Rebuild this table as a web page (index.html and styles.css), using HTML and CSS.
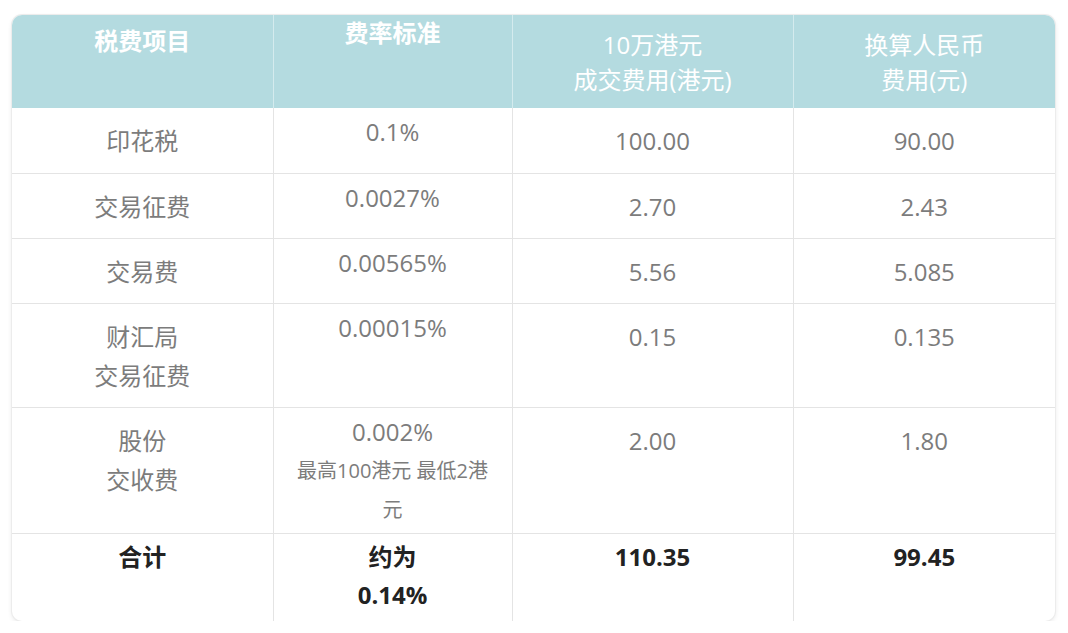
FILE: index.html
```html
<!DOCTYPE html>
<html lang="zh-CN">
<head>
<meta charset="utf-8">
<title>港股交易费用</title>
<link rel="stylesheet" href="styles.css">
</head>
<body>
<div class="card">
  <table class="fees">
    <colgroup>
      <col class="c1"><col class="c2"><col class="c3"><col class="c4">
    </colgroup>
    <thead>
      <tr class="head">
        <th class="h1">税费项目</th>
        <th class="h2">费率标准</th>
        <th class="h3">10万港元<br>成交费用(港元)</th>
        <th class="h3">换算人民币<br>费用(元)</th>
      </tr>
    </thead>
    <tbody>
      <tr class="r1">
        <td>印花税</td><td class="rate">0.1%</td><td>100.00</td><td>90.00</td>
      </tr>
      <tr class="r1">
        <td>交易征费</td><td class="rate">0.0027%</td><td>2.70</td><td>2.43</td>
      </tr>
      <tr class="r1">
        <td>交易费</td><td class="rate">0.00565%</td><td>5.56</td><td>5.085</td>
      </tr>
      <tr class="r2">
        <td>财汇局<br>交易征费</td><td class="rate">0.00015%</td><td>0.15</td><td>0.135</td>
      </tr>
      <tr class="r3">
        <td>股份<br>交收费</td><td class="rate">0.002%<span class="note">最高100港元 最低2港<br>元</span></td><td>2.00</td><td>1.80</td>
      </tr>
      <tr class="total">
        <td>合计</td><td>约为<br>0.14%</td><td>110.35</td><td>99.45</td>
      </tr>
    </tbody>
  </table>
</div>
</body>
</html>
```
FILE: styles.css
```css
html, body {
  margin: 0;
  padding: 0;
  background: #ffffff;
}
body {
  padding: 15px 13px 0 12px;
  font-family: "Open Sans", "Noto Sans CJK SC", sans-serif;
}
.card {
  width: 1043px;
  border-radius: 10px;
  overflow: hidden;
  box-shadow: 0 0 0 1px #ececec, 0 2px 5px rgba(0,0,0,0.10);
  background: #fff;
}
.fees {
  width: 100%;
  border-collapse: collapse;
  table-layout: fixed;
  font-size: 24px;
  color: #7c7c7c;
  text-align: center;
}
.c1 { width: 261px; }
.c2 { width: 239px; }
.c3 { width: 281px; }
.c4 { width: 262px; }

.head {
  height: 93px;
  background: #b4dbe0;
}
.head th {
  color: #ffffff;
  font-weight: normal;
  line-height: 35px;
  padding: 0 8px;
  border-right: 1px solid #d4ebee;
}
.head th:last-child { border-right: none; }
.h1 { vertical-align: top; padding-top: 8px !important; font-weight: bold !important; }
.h2 { vertical-align: top; padding-top: 0 !important; font-weight: bold !important; }
.h3 { vertical-align: middle; }

.fees td {
  vertical-align: top;
  line-height: 39px;
  padding: 13px 8px 12px;
  border: 1px solid #e4e4e4;
}
.fees tr td:first-child { border-left: none; }
.fees tr td:last-child { border-right: none; }
.fees tbody tr:last-child td { border-bottom: none; }
.fees tbody tr:first-child td { border-top: none; }

.fees td.rate { padding: 4px 4px; }
.r1 { height: 65px; }
.r2 { height: 103px; }
.r3 { height: 126px; }
.note {
  display: block;
  font-size: 20px;
  line-height: 39px;
  white-space: nowrap;
}

.total { height: 88px; }
.total td {
  padding-top: 4px;
  padding-bottom: 4px;
  line-height: 38px;
  color: #222222;
  font-weight: bold;
}
```
